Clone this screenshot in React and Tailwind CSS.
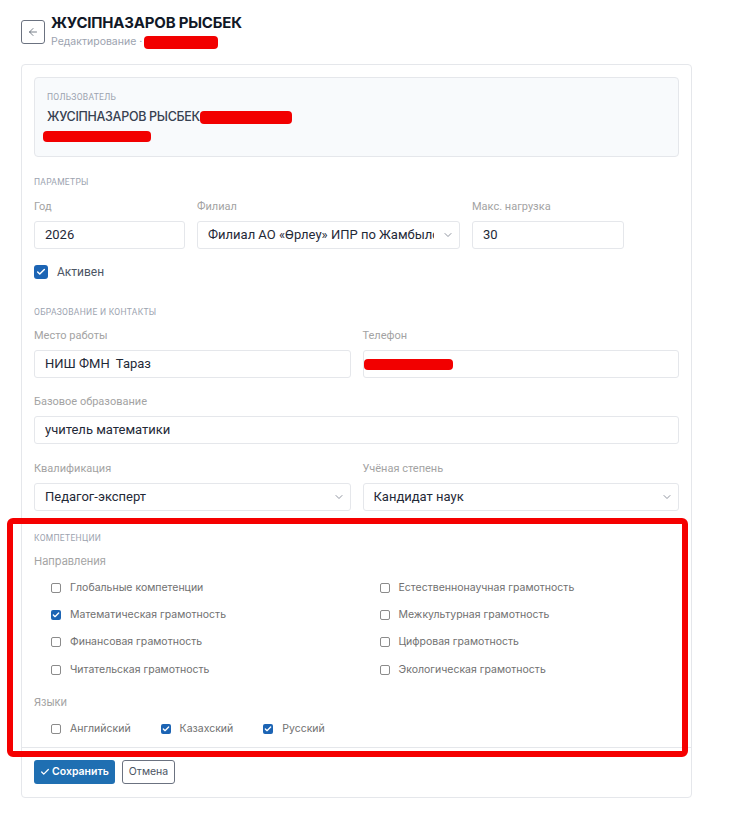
import React from "react";
import { ArrowLeft, ChevronDown, Check } from "lucide-react";

const directions = [
  ["Глобальные компетенции", false],
  ["Естественнонаучная грамотность", false],
  ["Математическая грамотность", true],
  ["Межкультурная грамотность", false],
  ["Финансовая грамотность", false],
  ["Цифровая грамотность", false],
  ["Читательская грамотность", false],
  ["Экологическая грамотность", false],
];

const languages = [
  ["Английский", false, "mr-[30px]"],
  ["Казахский", true, "mr-[30px]"],
  ["Русский", true, ""],
];

const Redacted = ({ className }) => (
  <span className={`inline-block bg-[#f20000] rounded-[4px] ${className}`} />
);

const SectionTitle = ({ children, className = "" }) => (
  <div className={`text-[8.5px] leading-[12px] tracking-[0.3px] uppercase text-[#9ca3af] ${className}`}>
    {children}
  </div>
);

const Label = ({ children }) => (
  <div className="text-[11px] leading-[14px] text-[#a3a3a3] mb-[7px]">{children}</div>
);

const Field = ({ children, select, bare }) => (
  <div
    className={`h-[28px] border border-[#e5e7eb] rounded-[3px] bg-white flex items-center text-[13px] text-[#1f2937] ${
      bare ? "pl-0 pr-[10px]" : select ? "pl-[10px] pr-[5px]" : "pl-[10px] pr-[10px]"
    }`}
  >
    <div className="flex-1 overflow-hidden whitespace-nowrap">{children}</div>
    {select && <ChevronDown size={12} strokeWidth={1.5} className="text-[#6b7280] ml-2 shrink-0" />}
  </div>
);

const SmallBox = ({ checked }) =>
  checked ? (
    <span className="w-[10px] h-[10px] rounded-[2px] bg-[#1c64b4] flex items-center justify-center shrink-0">
      <Check size={8} strokeWidth={4} className="text-white" />
    </span>
  ) : (
    <span className="w-[10px] h-[10px] rounded-[2px] border border-[#8b8b8b] bg-white shrink-0" />
  );

export default function App() {
  return (
    <div className="relative min-h-[820px] bg-white pl-[21px] pt-[14px] font-['Roboto',sans-serif]">
      <div className="flex items-center gap-[6px]">
        <button className="w-[24px] h-[24px] border border-[#6b7280] rounded-[3px] flex items-center justify-center text-[#4b5563]">
          <ArrowLeft size={12} strokeWidth={1.5} />
        </button>
        <div>
          <div className="font-['Inter',sans-serif] font-bold text-[15px] leading-[18px] text-[#111827] tracking-[-0.2px]">
            ЖУСІПНАЗАРОВ РЫСБЕК
          </div>
          <div className="flex items-center text-[10.5px] leading-[16px] text-[#9ca3af] font-['Inter',sans-serif] mt-[2px]">
            Редактирование ·
            <Redacted className="w-[74px] h-[13px] ml-[2px]" />
          </div>
        </div>
      </div>

      <div className="mt-[14px] w-[671px] border border-[#e5e7eb] rounded-[4px] px-[12px] pt-[12px] pb-[13px]">
        <div className="h-[80px] bg-[#f8fafc] border border-[#e5e7eb] rounded-[4px] pl-[12px] pt-[13px]">
          <SectionTitle>Пользователь</SectionTitle>
          <div className="flex items-center mt-[6px] font-['Inter',sans-serif] text-[12.5px] leading-[16px] text-[#374151] font-medium tracking-[-0.3px]">
            ЖУСІПНАЗАРОВ РЫСБЕК
            <Redacted className="w-[92px] h-[13px]" />
          </div>
          <Redacted className="w-[108px] h-[11px] mt-[5px] -ml-[4px]" />
        </div>

        <SectionTitle className="mt-[19px]">Параметры</SectionTitle>
        <div className="flex gap-[12px] mt-[12px]">
          <div className="w-[151px]">
            <Label>Год</Label>
            <Field>2026</Field>
          </div>
          <div className="w-[263px]">
            <Label>Филиал</Label>
            <Field select>Филиал АО «Өрлеу» ИПР по Жамбылской</Field>
          </div>
          <div className="w-[152px]">
            <Label>Макс. нагрузка</Label>
            <Field>30</Field>
          </div>
        </div>

        <label className="flex items-center gap-[9px] mt-[15px] h-[16px]">
          <span className="w-[14px] h-[14px] rounded-[3px] bg-[#1c64b4] flex items-center justify-center">
            <Check size={10} strokeWidth={3.5} className="text-white" />
          </span>
          <span className="text-[12px] text-[#4b5563]">Активен</span>
        </label>

        <SectionTitle className="mt-[26px]">Образование и контакты</SectionTitle>
        <div className="grid grid-cols-2 gap-[12px] mt-[11px]">
          <div>
            <Label>Место работы</Label>
            <Field>НИШ ФМН&nbsp; Тараз</Field>
          </div>
          <div>
            <Label>Телефон</Label>
            <Field bare>
              <Redacted className="w-[89px] h-[11px] align-middle" />
            </Field>
          </div>
        </div>

        <div className="mt-[17px]">
          <Label>Базовое образование</Label>
          <Field>учитель математики</Field>
        </div>

        <div className="grid grid-cols-2 gap-[12px] mt-[18px]">
          <div>
            <Label>Квалификация</Label>
            <Field select>Педагог-эксперт</Field>
          </div>
          <div>
            <Label>Учёная степень</Label>
            <Field select>Кандидат наук</Field>
          </div>
        </div>

        <SectionTitle className="mt-[21px]">Компетенции</SectionTitle>
        <div className="text-[11px] leading-[14px] text-[#a3a3a3] mt-[10px] font-['Inter',sans-serif]">
          Направления
        </div>
        <div className="grid grid-cols-2 gap-x-[12px] mt-[6px] font-['Inter',sans-serif]">
          {directions.map(([name, checked]) => (
            <div key={name} className="h-[27.3px] flex items-center gap-[9px] pl-[17px]">
              <SmallBox checked={checked} />
              <span className="text-[10.5px] text-[#707070]">{name}</span>
            </div>
          ))}
        </div>

        <div className="text-[11px] leading-[14px] text-[#a3a3a3] mt-[12px] font-['Inter',sans-serif]">
          Языки
        </div>
        <div className="flex items-center h-[20px] mt-[10px] pl-[17px] font-['Inter',sans-serif]">
          {languages.map(([name, checked, gap]) => (
            <div key={name} className={`flex items-center gap-[9px] ${gap}`}>
              <SmallBox checked={checked} />
              <span className="text-[10.5px] text-[#707070]">{name}</span>
            </div>
          ))}
        </div>

        <div className="border-t border-[#e5e7eb] mt-[8px] -mx-[12px] px-[12px] pt-[12px] flex gap-[7px] font-['Inter',sans-serif]">
          <button className="h-[24px] px-[6px] rounded-[3px] bg-[#1f6fb2] text-white text-[10.5px] font-semibold flex items-center gap-[2px]">
            <Check size={10} strokeWidth={3} />
            Сохранить
          </button>
          <button className="h-[24px] px-[6px] rounded-[3px] border border-[#6b7280] bg-white text-[#4b5563] text-[10.5px]">
            Отмена
          </button>
        </div>
      </div>

      {/* annotation frame around the competencies block */}
      <div className="absolute left-[7px] top-[518px] w-[681px] h-[239px] border-[6px] border-[#f50000] rounded-[6px] pointer-events-none" />
    </div>
  );
}
